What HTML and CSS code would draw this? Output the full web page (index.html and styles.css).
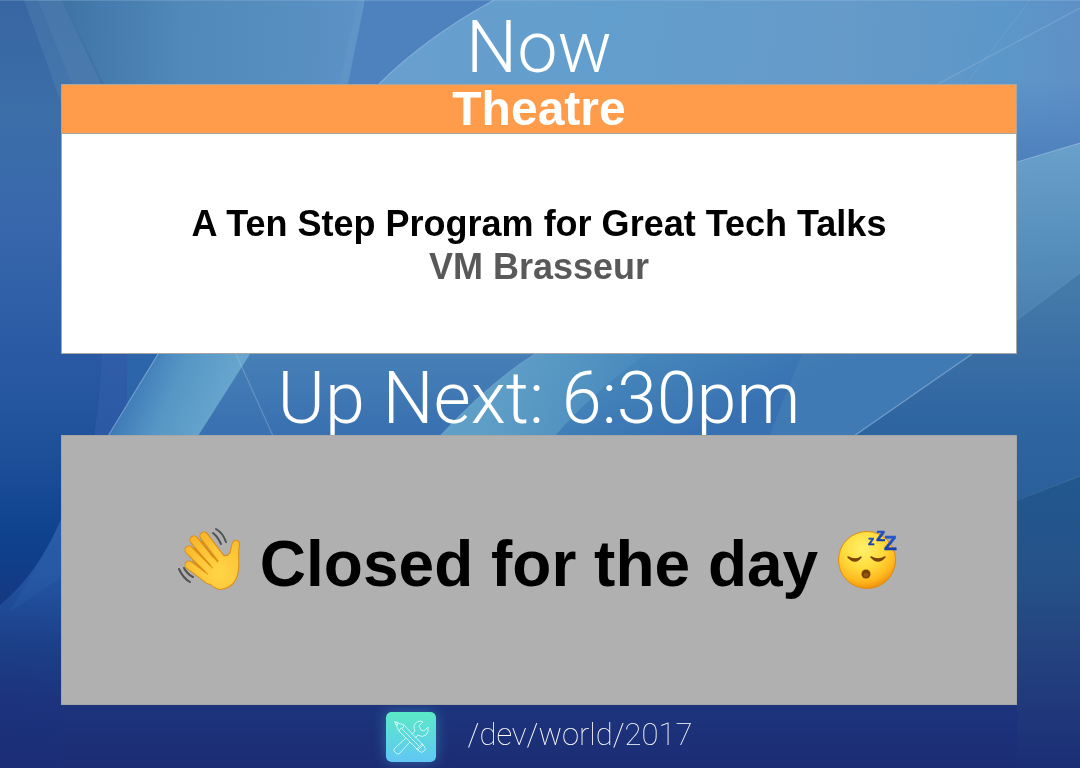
FILE: index.html
```html
<!DOCTYPE html>
<html lang="en">
<head>
<meta charset="utf-8">
<meta name="viewport" content="width=device-width, initial-scale=1">
<title>/dev/world/2017 – Now and Up Next</title>
<link rel="stylesheet" href="styles.css">
</head>
<body>
<svg class="backdrop" viewBox="0 0 1080 768" preserveAspectRatio="none" aria-hidden="true">
  <defs>
    <linearGradient id="base" x1="0" y1="0" x2="0" y2="1">
      <stop offset="0" stop-color="#3866a2"/><stop offset=".15" stop-color="#3c6ea8"/><stop offset=".28" stop-color="#3968ad"/>
      <stop offset=".46" stop-color="#2a5aa3"/><stop offset=".6" stop-color="#1d4f99"/><stop offset=".7" stop-color="#0e428d"/>
      <stop offset=".78" stop-color="#153983"/><stop offset="1" stop-color="#1b2c76"/>
    </linearGradient>
    <linearGradient id="topLeft" gradientUnits="userSpaceOnUse" x1="60" y1="40" x2="365" y2="50">
      <stop offset="0" stop-color="#3f73a6"/><stop offset=".4" stop-color="#5089ba"/><stop offset="1" stop-color="#5c92c5"/>
    </linearGradient>
    <linearGradient id="topRight" gradientUnits="userSpaceOnUse" x1="400" y1="20" x2="1080" y2="90">
      <stop offset="0" stop-color="#689fce"/><stop offset=".3" stop-color="#629ecd"/><stop offset=".65" stop-color="#659ac9"/><stop offset=".88" stop-color="#5c97c9"/><stop offset="1" stop-color="#5f90c6"/>
    </linearGradient>
    <linearGradient id="topShade" gradientUnits="userSpaceOnUse" x1="0" y1="80" x2="0" y2="162">
      <stop offset="0" stop-color="#4e80bd" stop-opacity="0"/><stop offset="1" stop-color="#4e80bd"/>
    </linearGradient>
    <linearGradient id="middle" gradientUnits="userSpaceOnUse" x1="0" y1="354" x2="0" y2="436">
      <stop offset="0" stop-color="#4780b6"/><stop offset="1" stop-color="#3870b1"/>
    </linearGradient>
    <linearGradient id="ribbon" gradientUnits="userSpaceOnUse" x1="120" y1="380" x2="215" y2="420">
      <stop offset="0" stop-color="#3871b3"/><stop offset=".5" stop-color="#5596c5"/><stop offset="1" stop-color="#67a5cd"/>
    </linearGradient>
    <linearGradient id="ribbonTwo" gradientUnits="userSpaceOnUse" x1="500" y1="380" x2="665" y2="440">
      <stop offset="0" stop-color="#5f9ec6"/><stop offset=".4" stop-color="#5394c2"/><stop offset="1" stop-color="#4180b8"/>
    </linearGradient>
    <linearGradient id="midRight" gradientUnits="userSpaceOnUse" x1="640" y1="350" x2="680" y2="440">
      <stop offset="0" stop-color="#4688bb"/><stop offset="1" stop-color="#3871b2"/>
    </linearGradient>
    <linearGradient id="sideLight" gradientUnits="userSpaceOnUse" x1="1040" y1="150" x2="1050" y2="310">
      <stop offset="0" stop-color="#68a0ca"/><stop offset=".6" stop-color="#568fbb"/><stop offset="1" stop-color="#4c82b3"/>
    </linearGradient>
    <linearGradient id="side" gradientUnits="userSpaceOnUse" x1="0" y1="290" x2="0" y2="490">
      <stop offset="0" stop-color="#447aaa"/><stop offset=".3" stop-color="#3b6fa5"/><stop offset=".65" stop-color="#2e66a2"/><stop offset="1" stop-color="#2a609b"/>
    </linearGradient>
    <linearGradient id="sideLow" gradientUnits="userSpaceOnUse" x1="0" y1="480" x2="0" y2="768">
      <stop offset="0" stop-color="#22588e"/><stop offset=".35" stop-color="#255188"/><stop offset=".6" stop-color="#24427f"/><stop offset="1" stop-color="#1b2e75"/>
    </linearGradient>
    <linearGradient id="leftLow" gradientUnits="userSpaceOnUse" x1="60" y1="520" x2="40" y2="768">
      <stop offset="0" stop-color="#275ca7"/><stop offset=".25" stop-color="#2253a0"/><stop offset=".5" stop-color="#1c4089"/><stop offset=".74" stop-color="#1c337d"/><stop offset="1" stop-color="#1b2d76"/>
    </linearGradient>
    <linearGradient id="floor" gradientUnits="userSpaceOnUse" x1="0" y1="700" x2="0" y2="768">
      <stop offset="0" stop-color="#1d357e"/><stop offset="1" stop-color="#1b2c74"/>
    </linearGradient>
  </defs>
  <rect width="1080" height="768" fill="url(#base)"/>
  <path d="M24 0H62L210 320H130Q80 150 24 0Z" fill="#5b8bb5" opacity=".3"/>
  <path d="M38 0H62L104 84H72Z" fill="#6292b9" opacity=".2"/>
  <path d="M62 0H365L320 354H220L104 84Z" fill="url(#topLeft)"/>
  <path d="M365 0H500L360 110H343Z" fill="#4e82be"/>
  <path d="M358 0H365L347 84H339Z" fill="#6a9bcb" opacity=".35"/>
  <path d="M494 0H1080V170L360 120L379 84Q425 38 494 0Z" fill="url(#topRight)"/>
  <path d="M1000 80H1080V170H1000Z" fill="url(#topShade)"/>
  <path d="M102 354Q100 400 94 436H180V354Z" fill="#3c64ae" opacity=".4"/>
  <path d="M127 354V436H180V354Z" fill="#2c6bad" opacity=".6"/>
  <path d="M158 354H540L440 436H108Z" fill="url(#middle)"/>
  <path d="M158 354H250L198 436H108Z" fill="url(#ribbon)"/>
  <path d="M535 354H980L856 436H440Z" fill="url(#midRight)"/>
  <path d="M535 354H646Q590 395 555 436H440Q490 382 535 354Z" fill="url(#ribbonTwo)"/>
  <path d="M802 354H972L856 436H769Z" fill="#4b86b6" opacity=".45"/>
  <path d="M972 354L1000 300L1080 260V768H840V446Z" fill="url(#side)"/>
  <path d="M1017 162L1080 143V273L1017 320Z" fill="url(#sideLight)"/>
  <path d="M1000 505L1080 476V768H1000Z" fill="url(#sideLow)"/>
  <path d="M62 517Q38 574 0 605V768H62Z" fill="url(#leftLow)"/>
  <path d="M62 517Q50 548 8 613Q40 592 62 577Z" fill="#3569b0" opacity=".2"/>
  <path d="M61 700H1017V768H61Z" fill="url(#floor)"/>
  <g class="rays">
    <path d="M379 84Q425 38 494 0"/><path d="M938 84L1080 8" opacity=".6"/><path d="M966 84L1030 0" opacity=".25"/>
    <path d="M158 354L108 436"/><path d="M236 354L273 436" opacity=".7"/><path d="M535 354Q490 382 440 436" opacity=".5"/><path d="M972 354L854 436"/>
    <path d="M1017 162L1080 143"/><path d="M1017 320L1080 273" opacity=".25"/><path d="M1017 500L1080 476" opacity=".3"/>
    <path d="M0 .5H1080" opacity=".5"/>
  </g>
</svg>

<main class="board">
  <h1 class="heading">Now</h1>
  <section class="card">
    <h2 class="room">Theatre</h2>
    <div class="session">
      <h3 class="talk">A Ten Step Program for Great Tech Talks</h3>
      <p class="speaker">VM Brasseur</p>
    </div>
  </section>
  <h1 class="heading">Up Next: 6:30pm</h1>
  <section class="card closed">
    <svg class="emoji" viewBox="0 0 66 66" role="img" aria-label="Waving hand">
      <defs>
        <radialGradient id="skin" gradientUnits="userSpaceOnUse" cx="42" cy="46" r="42"><stop offset="0" stop-color="#ffd447"/><stop offset=".6" stop-color="#fdc637"/><stop offset="1" stop-color="#fbb62b"/></radialGradient>
      </defs>
      <g fill="#dc8d14" stroke="#dc8d14" stroke-width="9" stroke-linecap="round">
        <path d="M27 9L46 34M17 13L38 38M12 23L34 45M12 38L32 53" fill="none"/>
        <path d="M30 50L46 30Q51 31 54 27C56 23 55 18 58 15Q61 14 61 18C59 26 61 34 60 42C59 54 53 60 43 61Q37 60 30 52Z" stroke-width="4" stroke-linejoin="round"/>
      </g>
      <g fill="url(#skin)" stroke="url(#skin)" stroke-width="7" stroke-linecap="round">
        <path d="M27 9L46 34M17 13L38 38M12 23L34 45M12 38L32 53" fill="none"/>
        <path d="M30 50L46 30Q51 31 54 27C56 23 55 18 58 15Q61 14 61 18C59 26 61 34 60 42C59 54 53 60 43 61Q37 60 30 52Z" stroke-width="2" stroke-linejoin="round"/>
      </g>
      <path d="M24 14L36 30M17 21L33 38M16 34L27 44" fill="none" stroke="#dc8d14" stroke-width="1.500" stroke-linecap="round"/>
      <g fill="none" stroke="#505153" stroke-width="2" stroke-linecap="round"><path d="M39 2Q46 6 49 15"/><path d="M36 6Q41 10 44 17"/><path d="M7 41Q10 47 16 50"/><path d="M2 42Q6 51 13 55"/></g>
    </svg>
    <h2 class="notice">Closed for the day</h2>
    <svg class="emoji" viewBox="0 0 66 66" role="img" aria-label="Sleeping face">
      <defs>
        <radialGradient id="face" cx=".43" cy=".3" r=".7"><stop offset="0" stop-color="#fff16a"/><stop offset=".5" stop-color="#ffdb3c"/><stop offset=".82" stop-color="#ffb91e"/><stop offset="1" stop-color="#f1920c"/></radialGradient>
        <linearGradient id="zed" x1="0" y1="0" x2="0" y2="1"><stop offset="0" stop-color="#2b63d5"/><stop offset="1" stop-color="#1236a2"/></linearGradient>
      </defs>
      <circle cx="32" cy="33" r="28.500" fill="url(#face)" stroke="#df8d10"/>
      <path d="M13 30Q20 38 26 30Q20 34 13 30ZM36 30Q43 38 50 30Q43 34 36 30Z" fill="#7b4307" stroke="#7b4307" stroke-width="1.500" stroke-linejoin="round"/>
      <ellipse cx="31" cy="47" rx="4.500" ry="4.500" fill="#7a4207"/><ellipse cx="31" cy="48" rx="2.500" ry="2" fill="#955711"/>
      <g class="zeds" aria-hidden="true" fill="url(#zed)" stroke="url(#zed)" stroke-width=".5"><text x="33" y="18" font-size="13">z</text><text x="41" y="14" font-size="19">z</text><text x="49" y="23" font-size="21">Z</text></g>
    </svg>
  </section>
  <footer class="footer">
    <svg class="logo" viewBox="0 0 50 50" aria-hidden="true">
      <defs><linearGradient id="tile" x1="0" y1="0" x2="0" y2="1"><stop offset="0" stop-color="#5be9c6"/><stop offset="1" stop-color="#60c7f5"/></linearGradient></defs>
      <rect width="50" height="50" rx="5" fill="url(#tile)"/>
      <g fill="none" stroke="#c9f7f1" stroke-width="1" stroke-linejoin="round" stroke-linecap="round">
        <path d="M9 10L18 13L38 34Q41 37 38 39Q36 42 33 39L13 19ZM9 10L11 14L12 11ZM13 19L15 16L17 16L18 13M16 17L35 36M32 38L37 33M31 37L36 32"/>
        <path d="M26 22L29 19Q26 13 31 10Q34 8 37 10L33 14L35 18L38 19L42 15Q43 20 40 23Q36 26 32 23L29 26"/>
        <path d="M22 28L24 30L13 42Q11 43 8 39Q7 38 9 36L20 26L22 28"/>
      </g>
    </svg>
    <p class="event">/dev/world/2017</p>
  </footer>
</main>
</body>
</html>
```
FILE: styles.css
```css
* {
  box-sizing: border-box;
}

body {
  margin: 0;
  background: #1b2c76;
  color: #000;
  font-family: "Liberation Sans", Arial, sans-serif;
}

h1,
h2,
h3,
p {
  margin: 0;
}

.backdrop {
  position: fixed;
  inset: 0;
  z-index: -1;
  width: 100%;
  height: 100%;
}

.rays {
  fill: none;
  stroke: #a8c6e6;
  stroke-opacity: .5;
  stroke-width: 1.2;
}

.board {
  display: grid;
  grid-template-rows: 84px 1fr 81px 1fr 63px;
  min-height: 100vh;
  padding: 0 63px 0 61px;
}

.heading {
  align-self: end;
  color: #fff;
  font-family: Roboto, sans-serif;
  font-size: 72px;
  font-weight: 300;
  line-height: 72px;
  text-align: center;
  white-space: nowrap;
}

.card {
  position: relative;
  display: flex;
  flex-direction: column;
  border: 1px solid #a6a6a6;
  background: #fff;
  text-align: center;
}

.room {
  border-bottom: 1px solid #a6a6a6;
  background: #ff9c4b;
  color: #fff;
  font-size: 48px;
  line-height: 48px;
}

.session {
  display: flex;
  flex: 1;
  flex-direction: column;
  justify-content: center;
  padding-top: 2px;
}

.talk,
.speaker {
  font-size: 36px;
  font-weight: 700;
  line-height: 43px;
}

.speaker {
  color: #595959;
}

.closed {
  flex-direction: row;
  align-items: center;
  justify-content: center;
  gap: 17px;
  padding-bottom: 12px;
  background: #b0b0b0;
}

.notice {
  font-size: 64px;
  line-height: 76px;
}

.emoji {
  width: 66px;
  height: 66px;
  flex: none;
  margin-bottom: 8px;
  overflow: visible;
}

.zeds {
  font-family: "Liberation Sans", Arial, sans-serif;
  font-weight: 700;
}

.footer {
  display: flex;
  align-items: center;
  justify-content: center;
  gap: 32px;
}

.logo {
  width: 50px;
  height: 50px;
  border-radius: 5px;
  box-shadow: 0 0 14px rgba(92, 190, 225, .4);
}

.event {
  padding-bottom: 4px;
  color: #fff;
  font-family: Roboto, sans-serif;
  font-size: 31px;
  font-weight: 100;
  line-height: 40px;
}
```
